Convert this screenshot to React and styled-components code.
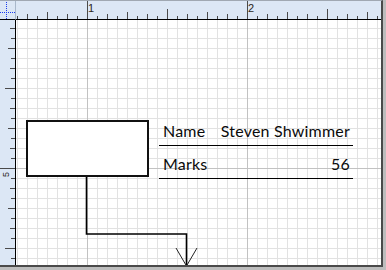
import styled, { createGlobalStyle } from "styled-components";

const GlobalStyle = createGlobalStyle`
  html, body {
    margin: 0;
    padding: 0;
    background: #bdbdbd;
  }
  body {
    font-family: "Lato", "Liberation Sans", sans-serif;
  }
`;

const Window = styled.div`
  width: 386px;
  height: 270px;
  background: #bdbdbd;
  overflow: hidden;
`;

const Frame = styled.div`
  box-sizing: border-box;
  width: 383px;
  height: 267px;
  border-top: 1px solid #a0a8b2;
  border-right: 2px solid #4a4a4a;
  border-bottom: 2px solid #4a4a4a;
  display: grid;
  grid-template-columns: 16px 1fr;
  grid-template-rows: 19px 1fr;
  background: #fff;
`;

const Corner = styled.div`
  background: #dce7f5;
  border-right: 1px solid #a9b8ca;
  border-bottom: 1px solid #000;
  svg {
    display: block;
  }
`;

const TopRuler = styled.div`
  background: #dce7f5;
  border-bottom: 1px solid #000;
  overflow: hidden;
  svg {
    display: block;
  }
`;

const SideRuler = styled.div`
  background: #dce7f5;
  border-right: 1px solid #000;
  overflow: hidden;
  svg {
    display: block;
  }
`;

const Canvas = styled.div`
  position: relative;
  overflow: hidden;
  background-color: #fff;
  background-image:
    linear-gradient(to right, #c2c2c2 1px, transparent 1px),
    linear-gradient(to bottom, #c2c2c2 1px, transparent 1px),
    linear-gradient(to right, #e2e2e2 1px, transparent 1px),
    linear-gradient(to bottom, #e2e2e2 1px, transparent 1px);
  background-size: 160px 100%, 100% 160px, 10px 100%, 100% 10px;
  background-position: 71px 0, 0 148px, 1px 0, 0 8px;
`;

const Box = styled.div`
  position: absolute;
  left: ${(p) => p.$x}px;
  top: ${(p) => p.$y}px;
  width: ${(p) => p.$w}px;
  height: ${(p) => p.$h}px;
  box-sizing: border-box;
  border: 2px solid #111;
  background: #fff;
`;

const Wires = styled.svg`
  position: absolute;
  left: 0;
  top: 0;
  overflow: visible;
`;

const Table = styled.div`
  position: absolute;
  left: 143px;
  top: 93px;
  width: 194px;
  display: grid;
`;

const Row = styled.div`
  box-sizing: border-box;
  height: 33px;
  display: flex;
  justify-content: space-between;
  align-items: flex-end;
  padding: 0 3px 6px 4px;
  border-bottom: 1.5px solid #000;
  font-size: 16px;
  line-height: 16px;
  letter-spacing: 0.2px;
  color: #0a0a0a;
`;

const hTicks = [];
for (let x = 17; x <= 381; x += 10) {
  const d = (((x - 87) % 160) + 160) % 160;
  const len = d === 0 ? 18 : d === 80 ? 10 : d % 40 === 0 ? 7 : d % 20 === 0 ? 5 : 3;
  hTicks.push({ x: x - 16 + 0.5, len });
}

const vTicks = [];
for (let y = 8; y < 245; y += 10) {
  const d = (((y - 148) % 160) + 160) % 160;
  const len = d === 0 ? 15 : d === 80 ? 10 : d % 40 === 0 ? 7 : d % 20 === 0 ? 5 : 4;
  vTicks.push({ y: y + 0.5, len });
}

export default function App() {
  return (
    <>
      <GlobalStyle />
      <Window>
        <Frame>
          <Corner>
            <svg width="15" height="18">
              <line x1="6.5" y1="1" x2="6.5" y2="18" stroke="#1b3cf0" strokeDasharray="1 1" />
              <line x1="0" y1="11.5" x2="15" y2="11.5" stroke="#1b3cf0" strokeDasharray="1 1" />
            </svg>
          </Corner>
          <TopRuler>
            <svg width="366" height="18">
              {hTicks.map((t) => (
                <line key={t.x} x1={t.x} y1={18 - t.len} x2={t.x} y2={18} stroke="#4a4a4a" />
              ))}
              <text x="72" y="11" fontSize="11" fontFamily="Liberation Sans, sans-serif" fill="#2b1f1a">1</text>
              <text x="232" y="11" fontSize="11" fontFamily="Liberation Sans, sans-serif" fill="#2b1f1a">2</text>
            </svg>
          </TopRuler>
          <SideRuler>
            <svg width="15" height="245">
              {vTicks.map((t) => (
                <line key={t.y} x1={15 - t.len} y1={t.y} x2={15} y2={t.y} stroke="#4a4a4a" />
              ))}
              <text
                x="0"
                y="0"
                fontSize="9"
                fontFamily="Liberation Sans, sans-serif"
                fill="#2b1f1a"
                transform="translate(8.5 157) rotate(-90)"
              >
                5
              </text>
            </svg>
          </SideRuler>
          <Canvas>
            <Box $x={10} $y={100} $w={123} $h={57} />
            <Wires width="365" height="245">
              <polyline
                points="70.5,157 70.5,214 170.5,214 170.5,245"
                fill="none"
                stroke="#000"
                strokeWidth="1.6"
              />
              <polyline points="160,228 170.5,246 181,228" fill="none" stroke="#222" strokeWidth="1" />
            </Wires>
            <Table>
              <Row>
                <span>Name</span>
                <span>Steven Shwimmer</span>
              </Row>
              <Row>
                <span>Marks</span>
                <span>56</span>
              </Row>
            </Table>
          </Canvas>
        </Frame>
      </Window>
    </>
  );
}
